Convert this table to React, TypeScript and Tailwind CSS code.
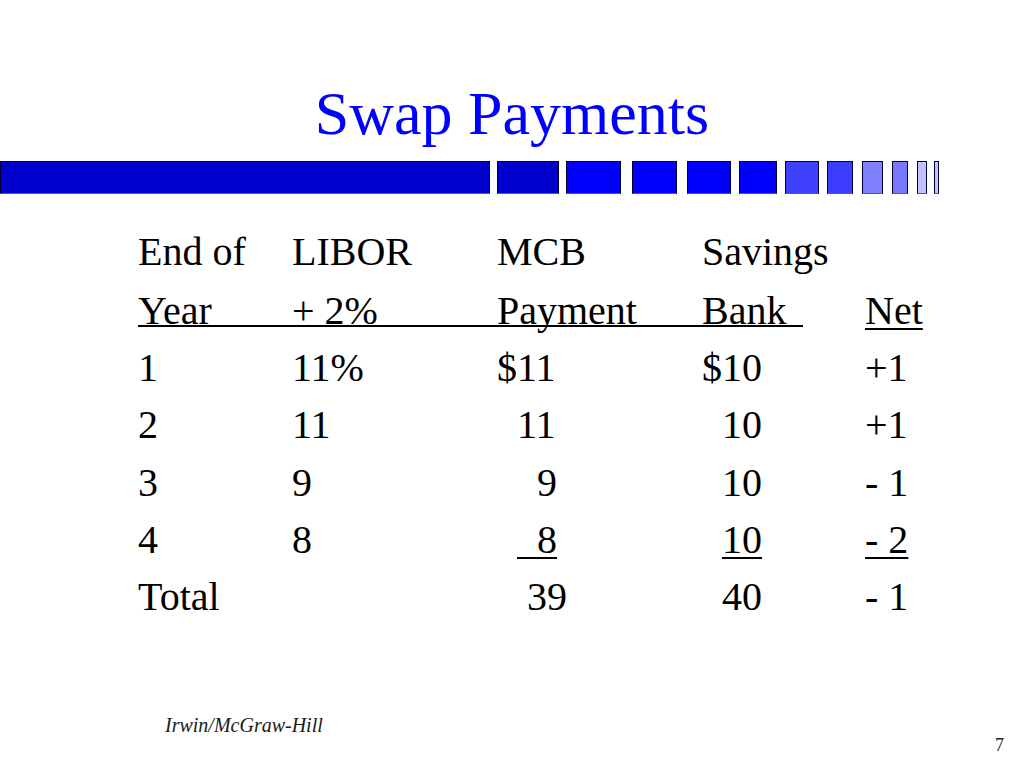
import React from 'react';

const blocks = [
  { w: 'w-[490px]', ml: 'ml-0', bg: 'bg-[#0000cc]' },
  { w: 'w-[62px]', ml: 'ml-[7px]', bg: 'bg-[#0000cc]' },
  { w: 'w-[55px]', ml: 'ml-[7px]', bg: 'bg-[#0000ff]' },
  { w: 'w-[45px]', ml: 'ml-[11px]', bg: 'bg-[#0000ff]' },
  { w: 'w-[44px]', ml: 'ml-[10px]', bg: 'bg-[#0000ff]' },
  { w: 'w-[38px]', ml: 'ml-[8px]', bg: 'bg-[#0000ff]' },
  { w: 'w-[34px]', ml: 'ml-[8px]', bg: 'bg-[#4040ff]' },
  { w: 'w-[26px]', ml: 'ml-[8px]', bg: 'bg-[#3c3cff]' },
  { w: 'w-[21px]', ml: 'ml-[9px]', bg: 'bg-[#8080ff]' },
  { w: 'w-[16px]', ml: 'ml-[9px]', bg: 'bg-[#7878ff]' },
  { w: 'w-[10px]', ml: 'ml-[9px]', bg: 'bg-[#c0c0ff]' },
  { w: 'w-[5px]', ml: 'ml-[7px]', bg: 'bg-[#c0c0ff]' },
];

const U = ({ children }: { children: React.ReactNode }) => (
  <span className="underline decoration-[2px] underline-offset-[4px]">{children}</span>
);

const rows: React.ReactNode[][] = [
  ['1', '11%', '$11', '$10', '+1'],
  ['2', '11', '  11', '  10', '+1'],
  ['3', '9', '    9', '  10', '- 1'],
  ['4', '8', <>{'  '}<U>{'  8'}</U></>, <>{'  '}<U>10</U></>, <U>- 2</U>],
  ['Total', '', '   39', '  40', '- 1'],
];

const Row = ({ cells }: { cells: React.ReactNode[] }) => (
  <div className="grid grid-cols-[154px_205px_205px_163px_1fr] h-[57.2px] whitespace-pre">
    {cells.map((c, i) => (
      <div key={i}>{c}</div>
    ))}
  </div>
);

const App = () => {
  return (
    <div className="w-[1024px] h-[768px] bg-white flex flex-col [font-family:'Liberation_Serif','Times_New_Roman',serif] text-black overflow-hidden">
      <h1 className="mt-[82px] text-center text-[62px] leading-none text-[#0000ff]">Swap Payments</h1>

      <div className="mt-[17px] flex h-[33px]">
        {blocks.map((b, i) => (
          <div key={i} className={`${b.w} ${b.ml} ${b.bg} border border-[#000033] border-b-[#5a5a8a] shrink-0`} />
        ))}
      </div>

      <div className="mt-[29px] pl-[138px] text-[40px] leading-[57.2px]">
        <div className="h-[59px]">
          <Row cells={['End of', 'LIBOR', 'MCB', 'Savings', '']} />
        </div>
        <div className="flex h-[57.2px]">
          <div className="w-[665px] h-[45px] border-b-2 border-black grid grid-cols-[154px_205px_205px_101px] shrink-0">
            <div>Year</div>
            <div>+ 2%</div>
            <div>Payment</div>
            <div>Bank</div>
          </div>
          <div className="ml-[62px]">
            <U>Net</U>
          </div>
        </div>
        {rows.map((r, i) => (
          <Row key={i} cells={r} />
        ))}
      </div>

      <div className="mt-auto flex items-end justify-between pb-[14px]">
        <div className="ml-[165px] mb-[19px] text-[20px] leading-none italic text-[#1a1a1a]">Irwin/McGraw-Hill</div>
        <div className="mr-[20px] text-[18px] leading-none text-[#222]">7</div>
      </div>
    </div>
  );
};

export default App;
